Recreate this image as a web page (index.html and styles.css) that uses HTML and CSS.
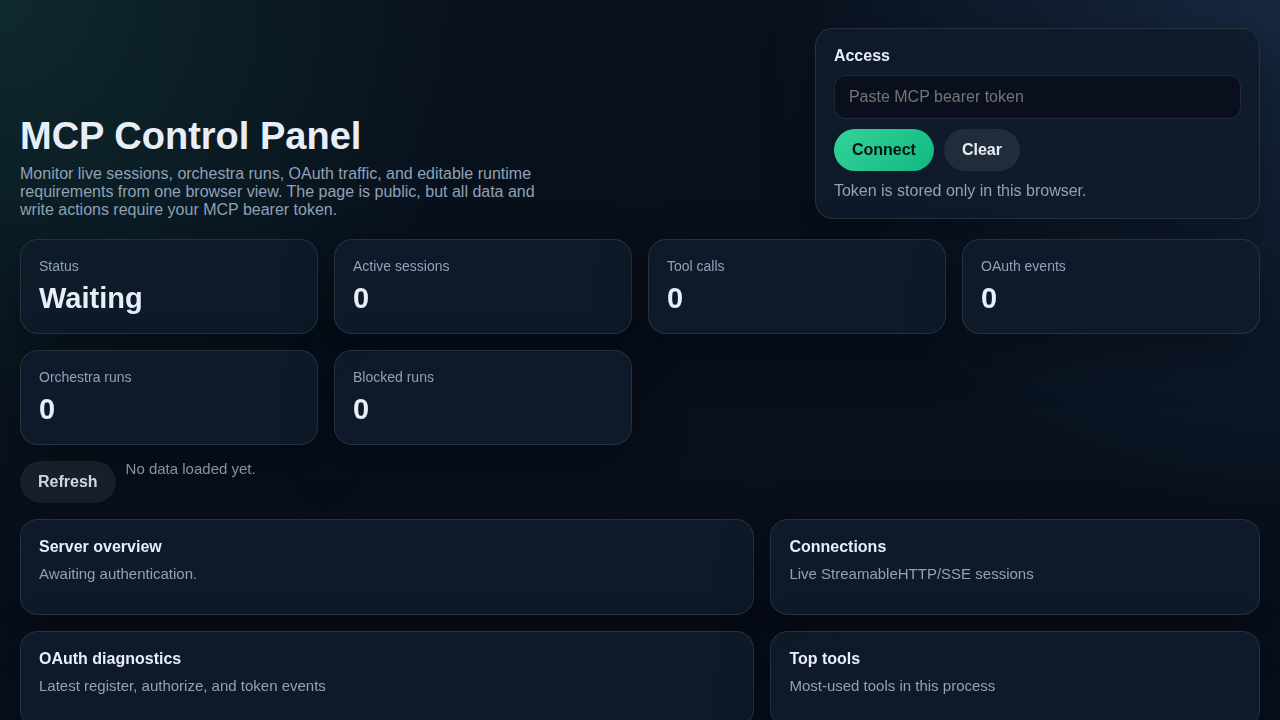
FILE: index.html
```html
<!DOCTYPE html>
<html lang="en">
<head>
<meta charset="utf-8">
<meta name="viewport" content="width=device-width, initial-scale=1">
<title>MCP Control Panel</title>
<link rel="stylesheet" href="styles.css">
</head>
<body>
<main class="shell">
  <header class="hero">
    <div class="intro">
      <h1>MCP Control Panel</h1>
      <p>Monitor live sessions, orchestra runs, OAuth traffic, and editable runtime requirements from one browser view. The page is public, but all data and write actions require your MCP bearer token.</p>
    </div>
    <form class="panel access">
      <label class="panel-title" for="token">Access</label>
      <input class="field" id="token" type="password" placeholder="Paste MCP bearer token">
      <div class="actions">
        <button class="btn btn-primary" type="button">Connect</button>
        <button class="btn" type="button">Clear</button>
      </div>
      <p class="note">Token is stored only in this browser.</p>
    </form>
  </header>

  <section class="stats" aria-label="Summary">
    <div class="panel"><div class="stat-label">Status</div><div class="stat-value">Waiting</div></div>
    <div class="panel"><div class="stat-label">Active sessions</div><div class="stat-value">0</div></div>
    <div class="panel"><div class="stat-label">Tool calls</div><div class="stat-value">0</div></div>
    <div class="panel"><div class="stat-label">OAuth events</div><div class="stat-value">0</div></div>
    <div class="panel"><div class="stat-label">Orchestra runs</div><div class="stat-value">0</div></div>
    <div class="panel"><div class="stat-label">Blocked runs</div><div class="stat-value">0</div></div>
  </section>

  <div class="toolbar">
    <button class="btn" type="button">Refresh</button>
    <span class="hint">No data loaded yet.</span>
  </div>

  <section class="details">
    <article class="panel detail"><h2 class="panel-title">Server overview</h2><p class="hint">Awaiting authentication.</p></article>
    <article class="panel detail"><h2 class="panel-title">Connections</h2><p class="hint">Live StreamableHTTP/SSE sessions</p></article>
    <article class="panel detail"><h2 class="panel-title">OAuth diagnostics</h2><p class="hint">Latest register, authorize, and token events</p></article>
    <article class="panel detail"><h2 class="panel-title">Top tools</h2><p class="hint">Most-used tools in this process</p></article>
  </section>
</main>
</body>
</html>
```
FILE: styles.css
```css
:root {
  --text: #e8eef8;
  --muted: #91a1b7;
  --line: rgba(255, 255, 255, 0.1);
}

* {
  box-sizing: border-box;
}

body {
  margin: 0;
  min-height: 100vh;
  color: var(--text);
  font: 16px/18px "Liberation Sans", Arial, sans-serif;
  background:
    radial-gradient(circle at top left, rgba(52, 211, 153, 0.13), transparent 480px),
    radial-gradient(circle at top right, rgba(96, 165, 250, 0.16), transparent 520px),
    linear-gradient(180deg, #09101c, #08101c 60%, #080f1e);
}

h1,
h2,
p {
  margin: 0;
}

.shell {
  padding: 28px 20px;
}

.hero {
  display: grid;
  grid-template-columns: 7fr 4fr;
  gap: 16px;
  align-items: end;
  margin-bottom: 20px;
}

.intro {
  max-width: 520px;
}

.intro h1 {
  margin-bottom: 8px;
  font-size: 38px;
  line-height: 42px;
  white-space: nowrap;
}

.intro p,
.note {
  color: var(--muted);
}

.note {
  line-height: 19px;
}

.panel {
  padding: 18px;
  border: 1px solid var(--line);
  border-radius: 18px;
  background: rgba(15, 27, 42, 0.92);
  box-shadow: 0 18px 50px rgba(0, 0, 0, 0.35);
  backdrop-filter: blur(14px);
}

.panel-title {
  font-size: 16px;
  font-weight: 700;
  line-height: 18px;
}

.access {
  display: grid;
  gap: 10px;
}

.field {
  width: 100%;
  padding: 12px 14px;
  border: 1px solid var(--line);
  border-radius: 12px;
  background: #090f1c;
  color: var(--text);
  font: inherit;
}

.field::placeholder {
  color: #757575;
}

.actions,
.toolbar {
  display: flex;
  flex-wrap: wrap;
  gap: 10px;
}

.btn {
  padding: 12px 18px;
  border: 0;
  border-radius: 21px;
  background: rgba(255, 255, 255, 0.08);
  color: var(--text);
  font: inherit;
  font-weight: 700;
  cursor: pointer;
}

.btn-primary {
  background: linear-gradient(135deg, #34d399, #10b981);
  color: #04150f;
}

.stats {
  display: grid;
  grid-template-columns: repeat(4, 1fr);
  gap: 16px;
}

.stat-label {
  margin-bottom: 8px;
  color: var(--muted);
  font-size: 14px;
  line-height: 16px;
}

.stat-value {
  font-size: 29px;
  font-weight: 700;
  line-height: 33px;
}

.toolbar {
  margin: 16px 0;
}

.hint {
  color: var(--muted);
  font-size: 15px;
  line-height: 16px;
}

.toolbar .btn,
.toolbar .hint {
  opacity: 0.9;
}

.details {
  display: grid;
  grid-template-columns: 3fr 2fr;
  gap: 16px;
}

.detail {
  min-height: 96px;
}

.detail .panel-title {
  margin-bottom: 10px;
}

@media (max-width: 900px) {
  .hero,
  .details {
    grid-template-columns: 1fr;
  }

  .stats {
    grid-template-columns: repeat(2, 1fr);
  }
}
```
